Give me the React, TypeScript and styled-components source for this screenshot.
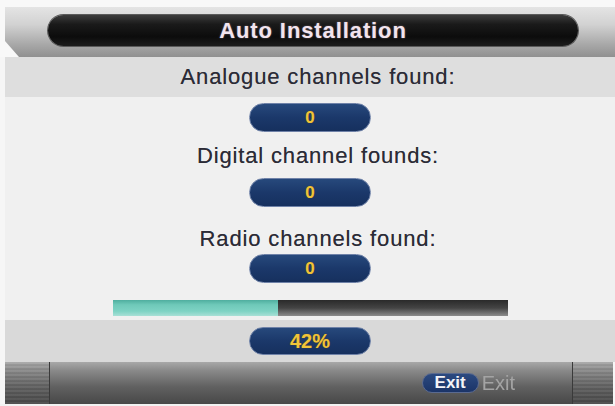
import React from "react";
import styled, { createGlobalStyle } from "styled-components";

const Global = createGlobalStyle`
  html, body { margin: 0; padding: 0; background: #ffffff; }
  #root { width: 615px; height: 406px; }
`;

const Screen = styled.div`
  width: 615px;
  height: 406px;
  background: #f6f6f6;
  display: flex;
  flex-direction: column;
  font-family: "Liberation Sans", Arial, sans-serif;
  overflow: hidden;
`;

const Header = styled.div`
  height: 57px;
  padding-top: 7px;
  box-sizing: border-box;
  background: #f8f8f8;
  display: flex;
`;

const HeaderBand = styled.div`
  flex: 1;
  margin-left: 5px;
  background: linear-gradient(180deg, #e4e4e4 0%, #d2d2d2 35%, #a8a8a8 75%, #909090 100%);
  clip-path: polygon(0 0, 100% 0, 100% 100%, 14px 100%, 0 34px);
  display: flex;
  align-items: flex-start;
  padding: 8px 37px 0 43px;
`;

const TitlePill = styled.div`
  flex: 1;
  height: 31px;
  border-radius: 16px;
  background: linear-gradient(180deg, #3c3c3c 0%, #1a1a1a 30%, #0c0c0c 70%, #1c1c1c 100%);
  box-shadow: 0 0 0 1px #5a5a5a;
  display: flex;
  align-items: center;
  justify-content: center;
`;

const Title = styled.span`
  color: #f2e4ee;
  font-weight: bold;
  font-size: 22px;
  letter-spacing: 0.9px;
  text-shadow: 0 0 2px rgba(255, 220, 240, 0.4);
`;

const Band = styled.div<{ $h: number; $bg: string }>`
  height: ${(p) => p.$h}px;
  margin-left: 5px;
  background: ${(p) => p.$bg};
  display: flex;
  flex-direction: column;
  align-items: center;
  justify-content: center;
  flex-shrink: 0;
`;

const Content = styled.div`
  height: 223px;
  margin-left: 5px;
  background: #f0f0f0;
  display: flex;
  flex-direction: column;
  align-items: center;
  padding-top: 6px;
  box-sizing: border-box;
`;

const Label = styled.div<{ $mt?: number }>`
  color: #2b2b36;
  font-size: 22px;
  letter-spacing: 0.85px;
  line-height: 26px;
  margin-top: ${(p) => p.$mt ?? 0}px;
  margin-left: 16px;
  text-shadow: 0 0 0.5px rgba(40, 40, 50, 0.6);
`;

const Pill = styled.div<{ $mt?: number }>`
  width: 122px;
  height: 29px;
  box-sizing: border-box;
  margin-top: ${(p) => p.$mt ?? 0}px;
  border-radius: 15px;
  background: linear-gradient(180deg, #27497c 0%, #1b386a 50%, #16305e 100%);
  border: 1px solid #6f82a8;
  display: flex;
  align-items: center;
  justify-content: center;
  color: #f0c43a;
  font-weight: bold;
  font-size: 17px;
  text-shadow: 0 0 1px #6a5010;
`;

const BigPill = styled(Pill)`
  font-size: 20px;
  height: 28px;
`;

const Progress = styled.div`
  width: 395px;
  height: 16px;
  margin-top: 17px;
  display: flex;
  background: linear-gradient(180deg, #2a2a2a 0%, #444 50%, #8c8c8c 100%);
`;

const ProgressFill = styled.div`
  height: 100%;
  background: linear-gradient(180deg, #4fae9f 0%, #6fc9b9 30%, #7ed3c4 70%, #a8e0d6 100%);
`;

const Footer = styled.div`
  height: 42px;
  margin: 0 2px 0 5px;
  display: grid;
  grid-template-columns: 45px 1fr 41px;
  background: linear-gradient(180deg, #a8a8a8 0%, #8a8a8a 20%, #606060 60%, #484848 100%);
  flex-shrink: 0;
`;

const FooterSide = styled.div<{ $side: "l" | "r" }>`
  ${(p) => (p.$side === "l" ? "border-right" : "border-left")}: 1px solid #3a3a3a;
  background: repeating-linear-gradient(180deg, rgba(255,255,255,0.05) 0 2px, rgba(0,0,0,0.05) 2px 4px);
`;

const FooterMid = styled.div`
  display: flex;
  align-items: center;
  justify-content: flex-end;
  padding-right: 57px;
  gap: 3px;
`;

const ExitKey = styled.div`
  height: 20px;
  width: 57px;
  box-sizing: border-box;
  border-radius: 10px;
  background: linear-gradient(180deg, #2c4a80 0%, #1b3468 100%);
  border: 1px solid #5a6a90;
  color: #f4f4f8;
  font-weight: bold;
  font-size: 17px;
  display: flex;
  align-items: center;
  justify-content: center;
`;

const ExitText = styled.span`
  color: #a4a4a4;
  font-size: 20px;
  filter: blur(0.4px);
`;

const BottomEdge = styled.div`
  flex: 1;
  background: #f2f2f2;
`;

export default function App() {
  const percent = 42;
  return (
    <>
      <Global />
      <Screen>
        <Header>
          <HeaderBand>
            <TitlePill>
              <Title>Auto Installation</Title>
            </TitlePill>
          </HeaderBand>
        </Header>
        <Band $h={40} $bg="#dedede">
          <Label>Analogue channels found:</Label>
        </Band>
        <Content>
          <Pill>0</Pill>
          <Label $mt={11}>Digital channel founds:</Label>
          <Pill $mt={9}>0</Pill>
          <Label $mt={19}>Radio channels found:</Label>
          <Pill $mt={2}>0</Pill>
          <Progress>
            <ProgressFill style={{ width: `${percent}%` }} />
          </Progress>
        </Content>
        <Band $h={42} $bg="#d9d9d9">
          <BigPill>{percent}%</BigPill>
        </Band>
        <Footer>
          <FooterSide $side="l" />
          <FooterMid>
            <ExitKey>Exit</ExitKey>
            <ExitText>Exit</ExitText>
          </FooterMid>
          <FooterSide $side="r" />
        </Footer>
        <BottomEdge />
      </Screen>
    </>
  );
}
